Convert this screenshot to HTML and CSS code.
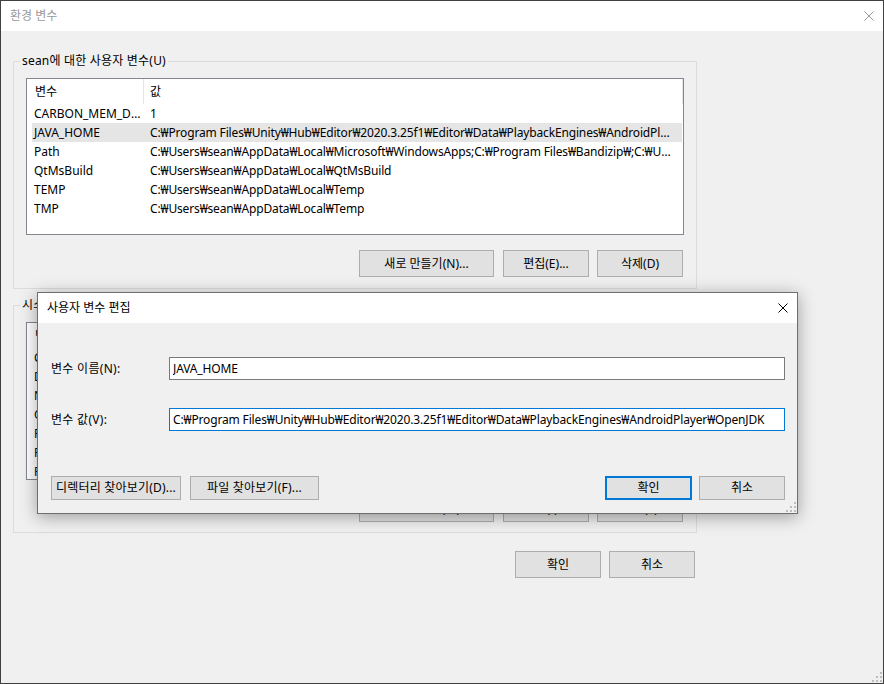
FILE: index.html
```html
<!DOCTYPE html>
<html lang="ko"><head><meta charset="utf-8"><title>환경 변수</title>
<link rel="stylesheet" href="styles.css">
</head><body>
<div class="win">
  <div class="tb"><span class="tt">환경 변수</span><svg class="cx" width="10" height="10" viewBox="0 0 10 10"><path d="M0.5 0.5L9.5 9.5M9.5 0.5L0.5 9.5" stroke="#999" stroke-width="1"/></svg></div>
  <div class="wb">
    <fieldset class="grp"><legend>sean에 대한 사용자 변수(U)</legend>
      <div class="lv">
        <div class="lh"><div class="c1">변수</div><div class="c2">값</div></div>
        <div class="lr"><div class="c1">CARBON_MEM_DISABLE</div><div class="c2">1</div></div>
        <div class="lr sel"><div class="c1">JAVA_HOME</div><div class="c2">C:₩Program Files₩Unity₩Hub₩Editor₩2020.3.25f1₩Editor₩Data₩PlaybackEngines₩AndroidPlayer₩OpenJDK</div></div>
        <div class="lr"><div class="c1">Path</div><div class="c2">C:₩Users₩sean₩AppData₩Local₩Microsoft₩WindowsApps;C:₩Program Files₩Bandizip₩;C:₩Users₩sean₩AppData₩Local₩Programs</div></div>
        <div class="lr"><div class="c1">QtMsBuild</div><div class="c2">C:₩Users₩sean₩AppData₩Local₩QtMsBuild</div></div>
        <div class="lr"><div class="c1">TEMP</div><div class="c2">C:₩Users₩sean₩AppData₩Local₩Temp</div></div>
        <div class="lr"><div class="c1">TMP</div><div class="c2">C:₩Users₩sean₩AppData₩Local₩Temp</div></div>
      </div>
      <div class="br"><button class="b bn">새로 만들기(N)...</button><button class="b">편집(E)...</button><button class="b">삭제(D)</button></div>
    </fieldset>
    <fieldset class="grp g2"><legend>시스템 변수(S)</legend>
      <div class="lv">
        <div class="lh"><div class="c1">변수</div><div class="c2">값</div></div>
        <div class="lr"><div class="c1">ComSpec</div><div class="c2">C:₩WINDOWS₩system32₩cmd.exe</div></div>
        <div class="lr"><div class="c1">DriverData</div><div class="c2">C:₩Windows₩System32₩Drivers₩DriverData</div></div>
        <div class="lr"><div class="c1">NUMBER_OF_PROCESSORS</div><div class="c2">8</div></div>
        <div class="lr"><div class="c1">OS</div><div class="c2">Windows_NT</div></div>
        <div class="lr"><div class="c1">Path</div><div class="c2">C:₩WINDOWS₩system32;C:₩WINDOWS;C:₩WINDOWS₩System32₩Wbem</div></div>
        <div class="lr"><div class="c1">PATHEXT</div><div class="c2">.COM;.EXE;.BAT;.CMD;.VBS;.VBE;.JS;.JSE;.WSF;.WSH;.MSC</div></div>
        <div class="lr"><div class="c1">PROCESSOR_ARCHITECTURE</div><div class="c2">AMD64</div></div>
      </div>
      <div class="br"><button class="b bn">새로 만들기(W)...</button><button class="b">편집(I)...</button><button class="b">삭제(L)</button></div>
    </fieldset>
    <div class="ft"><button class="b">확인</button><button class="b">취소</button></div>
  </div>
  <svg class="grip" width="10" height="10" viewBox="0 0 10 10"><path d="M8 0h2v2h-2zM4 4h2v2h-2zM8 4h2v2h-2zM0 8h2v2h-2zM4 8h2v2h-2zM8 8h2v2h-2z" fill="#bcbcbc"/></svg>
</div>

<div class="dlg">
  <div class="tb dt"><span>사용자 변수 편집</span><svg class="cx" width="10" height="10" viewBox="0 0 10 10"><path d="M0.5 0.5L9.5 9.5M9.5 0.5L0.5 9.5" stroke="#000" stroke-width="1"/></svg></div>
  <div class="dbody">
    <div class="fr"><label for="vn">변수 이름(N):</label><input id="vn" class="in" type="text" value="JAVA_HOME"></div>
    <div class="fr"><label for="vv">변수 값(V):</label><input id="vv" class="in foc" type="text" value="C:₩Program Files₩Unity₩Hub₩Editor₩2020.3.25f1₩Editor₩Data₩PlaybackEngines₩AndroidPlayer₩OpenJDK"></div>
    <div class="db">
      <button class="b bd">디렉터리 찾아보기(D)...</button><button class="b bf">파일 찾아보기(F)...</button>
      <button class="b ok">확인</button><button class="b cn">취소</button>
    </div>
  </div>
  <svg class="grip" width="10" height="10" viewBox="0 0 10 10"><path d="M8 0h2v2h-2zM4 4h2v2h-2zM8 4h2v2h-2zM0 8h2v2h-2zM4 8h2v2h-2zM8 8h2v2h-2z" fill="#bcbcbc"/></svg>
</div>
</body></html>
```

FILE: styles.css
```css
*{box-sizing:border-box}
html,body{margin:0;padding:0}
body{font-family:"Noto Sans","Noto Sans CJK KR",sans-serif;font-size:12px;line-height:16px;color:#000;background:#f0f0f0}
.win{position:relative;width:884px;height:684px;border:1px solid #404040;background:#f0f0f0}
.tb{height:30px;background:#fff;display:flex;align-items:center;justify-content:space-between;padding:0 9px}
.tt{color:#999}
.cx{display:block}
.wb{padding:0 12px}

fieldset.grp{margin:22px 0 0;width:684px;border:1px solid #dcdcdc;padding:9px 12px 11px;min-width:0}
fieldset.grp legend{padding:0 2px;margin-left:-6px;line-height:16px;letter-spacing:.2px}
fieldset.g2{margin-top:8px;padding-bottom:10px}

.lv{height:157px;border:1px solid #828790;background:#fff;overflow:hidden}
.g2 .lv{height:158px}
.lh{display:flex;height:25px;line-height:25px}
.lh .c1{width:117px;padding-left:8px;border-right:1px solid #e5e5e5}
.lh .c2{flex:1;padding-left:6px;border-right:1px solid #e5e5e5}
.lr{display:flex;height:19px;line-height:19px;margin:0 1px 0 5px}
.lr div{white-space:nowrap;overflow:hidden;text-overflow:ellipsis}
.lr .c1{width:114px;padding:0 4px 0 2px}
.lr .c2{flex:1;padding:0 6px 0 4px;letter-spacing:-.15px}
.lr.sel{background:#e5e5e5}

.b{height:27px;border:1px solid #adadad;background:#e1e1e1;font:inherit;color:#000;padding:0;width:86px;white-space:nowrap}
.br{display:flex;justify-content:flex-end;margin-top:15px;padding-right:1px}
.br .b+.b{margin-left:8px}
.br .bn{width:135px;margin-right:1px}
.ft{display:flex;justify-content:flex-end;width:684px;margin-top:18px;padding-right:2px}
.ft .b+.b{margin-left:8px}

.grip{position:absolute;right:1px;bottom:1px}

.dlg{position:absolute;left:37px;top:292px;width:761px;border:1px solid #6e6e6e;background:#f0f0f0;box-shadow:0 3px 16px rgba(0,0,0,.35)}
.dbody{padding:34px 12px 13px 13px}
.fr{display:flex;align-items:center}
.fr+.fr{margin-top:28px}
.fr label{width:118px;letter-spacing:.3px}
.in{flex:1;height:23px;border:1px solid #7a7a7a;background:#fff;padding:0 3px;font:inherit;color:#000;outline:none;letter-spacing:-.15px}
.in.foc{border-color:#0078d7}
.db{display:flex;margin-top:45px}
.db .b{height:24px}
.db .bd{width:130px;letter-spacing:.2px}
.db .bf{width:129px;margin-left:9px;letter-spacing:.2px}
.db .ok{width:87px;margin-left:auto;border:2px solid #0078d7}
.db .cn{margin-left:7px}
```
